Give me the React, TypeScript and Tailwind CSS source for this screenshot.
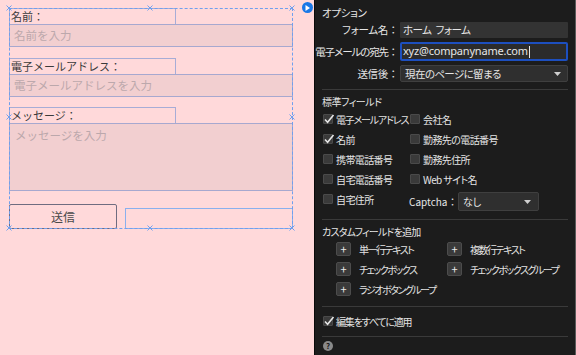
import React from "react";

const jp = "[font-family:'Noto_Sans_CJK_JP','Noto_Sans',sans-serif]";
const palt = "[font-feature-settings:'palt']";

function Check({ checked }: { checked?: boolean }) {
  return (
    <div className="relative w-[10px] h-[10px] shrink-0 bg-[#3a3a3a] border border-[#4a4a4a] rounded-[1px]">
      {checked && (
        <svg className="absolute left-[-1px] top-[-2px]" width="12" height="12" viewBox="0 0 12 12">
          <path d="M2 6.5 L4.6 9.2 L10.5 2" fill="none" stroke="#e6e6e6" strokeWidth="1.6" />
        </svg>
      )}
    </div>
  );
}

function CB({ label, checked, tight }: { label: string; checked?: boolean; tight?: boolean }) {
  return (
    <div className="flex items-center gap-[3px] pl-[1px]">
      <Check checked={checked} />
      <span
        className={`text-[10px] ${tight ? "tracking-[-1.2px]" : "tracking-[-0.6px]"} text-[#e4e4e4] whitespace-nowrap ${palt}`}
      >
        {label}
      </span>
    </div>
  );
}

function Plus({ label }: { label: string }) {
  return (
    <div className="flex items-center gap-[8px]">
      <div className="w-[15px] h-[14px] shrink-0 bg-[#3a3a3a] border border-[#4c4c4c] rounded-[2px] flex items-center justify-center text-[#e8e8e8] text-[11px] leading-none">+</div>
      <span className={`text-[10px] tracking-[-1.5px] text-[#e4e4e4] whitespace-nowrap ${palt}`}>{label}</span>
    </div>
  );
}

function Sep() {
  return <div className="h-px bg-[#3a3a3a]" />;
}

function Caret() {
  return (
    <svg width="7" height="4" viewBox="0 0 7 4">
      <path d="M0 0 L7 0 L3.5 4 Z" fill="#cfcfcf" />
    </svg>
  );
}

function Marker({ x, y }: { x: number; y: number }) {
  return (
    <svg className="absolute" style={{ left: x - 3, top: y - 3 }} width="6" height="6" viewBox="0 0 6 6">
      <path d="M0.5 0.5 L5.5 5.5 M5.5 0.5 L0.5 5.5" stroke="#6f9fee" strokeWidth="1" />
    </svg>
  );
}

function RLabel({ text, tr }: { text: string; tr: string }) {
  return (
    <div className="w-[76px] flex justify-end items-center text-[10.5px] whitespace-nowrap">
      <span className={`${palt} ${tr}`}>{text}</span>
      <span className="w-[10px] text-center">：</span>
    </div>
  );
}

export default function App() {
  return (
    <div className={`w-[576px] h-[355px] flex overflow-hidden ${jp}`}>
      {/* canvas */}
      <div className="relative w-[314px] shrink-0 h-full bg-[#ffd9da] pl-[9px] pt-[8px]">
        <div className="w-[284px] flex flex-col text-[#3a3a3a]">
          <div className="w-[167px] h-[16px] border border-b-0 border-[#a7acd6] text-[11px] leading-[14px] pl-[1px]">名前：</div>
          <div className="h-[23px] border border-[#a7a8cf] bg-[#f2cfd0] text-[11.5px] text-[#bca8ac] pl-[4px] flex items-center">名前を入力</div>
          <div className="mt-[11px] w-[167px] h-[16px] border border-b-0 border-[#a7acd6] text-[11px] leading-[14px] pl-[1px]">電子メールアドレス：</div>
          <div className="h-[23px] border border-[#a7a8cf] bg-[#f2cfd0] text-[11.5px] text-[#bca8ac] pl-[4px] flex items-center">電子メールアドレスを入力</div>
          <div className="mt-[10px] w-[167px] h-[16px] border border-b-0 border-[#a7acd6] text-[11px] leading-[14px] pl-[1px]">メッセージ：</div>
          <div className="h-[68px] border border-[#a7a8cf] bg-[#f2cfd0] text-[11.5px] text-[#bca8ac] pl-[5px] pt-[3px]">メッセージを入力</div>
          <div className="mt-[13px] flex items-end gap-[8px]">
            <div className="w-[108px] h-[25px] border border-[#6f6c80] rounded-[2px] flex items-center justify-center text-[12px] text-[#4a4a4a]">送信</div>
            <div className="flex-1 h-[21px] border border-[#8ab0ee]" />
          </div>
        </div>
        {/* selection box */}
        <div className="absolute left-[9px] top-[8px] w-[284px] h-[221px] border border-dashed border-[#6f9fee] pointer-events-none" />
        <Marker x={9} y={8} />
        <Marker x={150} y={8} />
        <Marker x={292} y={8} />
        <Marker x={9} y={117} />
        <Marker x={292} y={117} />
        <Marker x={9} y={228} />
        <Marker x={150} y={228} />
        <Marker x={292} y={228} />
        {/* blue icon */}
        <div className="absolute left-[302px] top-[2px] w-[11px] h-[11px] rounded-full bg-[#1a78e6] flex items-center justify-center">
          <svg width="5" height="6" viewBox="0 0 5 6"><path d="M0.5 0 L5 3 L0.5 6 Z" fill="#fff" /></svg>
        </div>
      </div>

      {/* panel */}
      <div className="flex-1 min-w-0 h-full bg-[#1c1c1c] border-l border-[#0a0a0a] border-r border-r-[#5a5a5a] pl-[7px] pr-[7px] pt-[6px] flex flex-col text-[#e6e6e6]">
        <div className={`h-[14px] flex items-center text-[10.5px] tracking-[-0.3px] ${palt}`}>オプション</div>
        <div className="mt-[2px] h-[16px] flex items-center">
          <RLabel text="フォーム名" tr="tracking-[-0.3px]" />
          <div className={`ml-[2px] flex-1 h-full bg-[#333333] rounded-[1px] flex items-center gap-[4px] pl-[3px] text-[10.5px] tracking-[-0.5px] ${palt}`}>
            <span>ホーム</span>
            <span>フォーム</span>
          </div>
        </div>
        <div className="mt-[4px] h-[19px] flex items-center">
          <RLabel text="電子メールの宛先" tr="tracking-[-1.1px]" />
          <div className="ml-[2px] flex-1 h-full bg-[#2b2b2b] border-2 border-[#1d4fbf] rounded-[2px] flex items-center pl-[1px] text-[11px] tracking-[-0.2px] [font-family:'Noto_Sans',sans-serif]">
            xyz@companyname.com<span className="w-px h-[12px] bg-[#e6e6e6] ml-[1px]" />
          </div>
        </div>
        <div className="mt-[4px] h-[17px] flex items-center">
          <RLabel text="送信後" tr="tracking-[-0.3px]" />
          <div className={`ml-[2px] flex-1 h-full bg-[#2f2f2f] border border-[#3f3f3f] rounded-[2px] flex items-center justify-between pl-[4px] pr-[6px] text-[10.5px] tracking-[-0.6px] ${palt}`}>
            <span>現在のページに留まる</span>
            <Caret />
          </div>
        </div>
        <div className="mt-[7px]"><Sep /></div>

        <div className={`mt-[4px] h-[14px] flex items-center text-[10px] tracking-[-0.5px] ${palt}`}>標準フィールド</div>
        <div className="mt-[1px] grid grid-cols-[87px_1fr] auto-rows-[20px] items-center">
          <CB label="電子メールアドレス" checked tight />
          <CB label="会社名" />
          <CB label="名前" checked />
          <CB label="勤務先の電話番号" />
          <CB label="携帯電話番号" />
          <CB label="勤務先住所" />
          <CB label="自宅電話番号" />
          <CB label="Web サイト名" />
          <CB label="自宅住所" />
          <div className="flex items-center pt-[5px]">
            <span className="text-[10px] w-[49px] whitespace-nowrap flex">
              <span>Captcha</span>
              <span className="w-[10px] text-center">：</span>
            </span>
            <div className={`w-[81px] h-[19px] bg-[#2f2f2f] border border-[#3f3f3f] rounded-[2px] flex items-center justify-between pl-[4px] pr-[7px] text-[10px] ${palt}`}>
              <span>なし</span>
              <Caret />
            </div>
          </div>
        </div>
        <div className="mt-[10px]"><Sep /></div>

        <div className={`mt-[4px] h-[14px] flex items-center text-[10px] tracking-[-0.8px] ${palt}`}>カスタムフィールドを追加</div>
        <div className="mt-[1px] pl-[14px] grid grid-cols-[111px_1fr] auto-rows-[20px] items-center">
          <Plus label="単一行テキスト" />
          <Plus label="複数行テキスト" />
          <Plus label="チェックボックス" />
          <Plus label="チェックボックスグループ" />
          <Plus label="ラジオボタングループ" />
        </div>
        <div className="mt-[7px]"><Sep /></div>
        <div className="mt-[4px] h-[20px] flex items-center">
          <CB label="編集をすべてに適用" checked tight />
        </div>
        <div className="mt-[5px]"><Sep /></div>
        <div className="h-[18px] flex items-center pl-[1px]">
          <div className="w-[10px] h-[10px] rounded-full bg-[#8a8a8a] flex items-center justify-center text-[8px] font-bold text-[#1c1c1c] leading-none">?</div>
        </div>
      </div>
    </div>
  );
}
